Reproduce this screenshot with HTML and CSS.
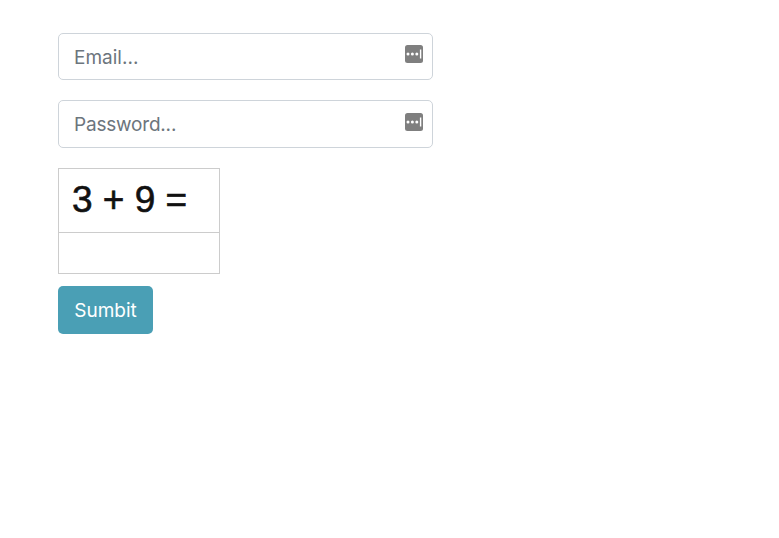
FILE: index.html
```html
<!DOCTYPE html>
<html lang="en">
<head>
<meta charset="utf-8">
<title>Sign in</title>
<link rel="stylesheet" href="styles.css">
</head>
<body>
<form class="form">
  <div class="field field-email">
    <span class="label">Email...</span>
    <svg class="key" viewBox="0 0 18 18"><rect width="18" height="18" rx="2.5" fill="#7f7f7f"/><g fill="#fff"><circle cx="3" cy="8.9" r="1.5"/><circle cx="7.4" cy="8.9" r="1.5"/><circle cx="11.8" cy="8.9" r="1.5"/><rect x="14.9" y="4.5" width="1.4" height="9"/></g></svg>
  </div>
  <div class="field field-password">
    <span class="label">Password...</span>
    <svg class="key" viewBox="0 0 18 18"><rect width="18" height="18" rx="2.5" fill="#7f7f7f"/><g fill="#fff"><circle cx="3" cy="8.9" r="1.5"/><circle cx="7.4" cy="8.9" r="1.5"/><circle cx="11.8" cy="8.9" r="1.5"/><rect x="14.9" y="4.5" width="1.4" height="9"/></g></svg>
  </div>
  <div class="captcha">
    <div class="question"><span>3 + 9 =</span></div>
    <div class="answer"></div>
  </div>
  <button class="submit" type="button"><span>Sumbit</span></button>
</form>
</body>
</html>
```
FILE: styles.css
```css
* { box-sizing: border-box; }
body { margin: 0; background: #fff; font-family: Inter, "Liberation Sans", sans-serif; }
.form { display: flex; flex-direction: column; align-items: flex-start; padding: 33px 0 0 58px; }
.field { display: flex; justify-content: space-between; align-items: center; width: 375px; border: 1px solid #ced4da; border-radius: 5px; padding: 0 9px 0 15px; color: #6c757d; font-size: 19px; }
.field-email { height: 47px; margin-bottom: 20px; }
.field-email .label { padding-top: 2px; }
.field-password { height: 48px; margin-bottom: 20px; }
.field-password .label { letter-spacing: -0.2px; }
.key { width: 18px; height: 18px; margin-bottom: 5px; }
.field-password .key { margin-bottom: 4px; }
.captcha { width: 162px; height: 106px; border: 1px solid #ccc; margin-bottom: 12px; }
.question { height: 64px; border-bottom: 1px solid #ccc; padding-left: 13px; font: 37px/61px "Liberation Sans", Arial, sans-serif; color: #111; -webkit-text-stroke: 0.6px #111; white-space: nowrap; }
.submit { width: 95px; height: 48px; border: 0; border-radius: 5px; background: #4a9fb5; color: #fff; font: 19px Inter, sans-serif; padding: 0; }
```
